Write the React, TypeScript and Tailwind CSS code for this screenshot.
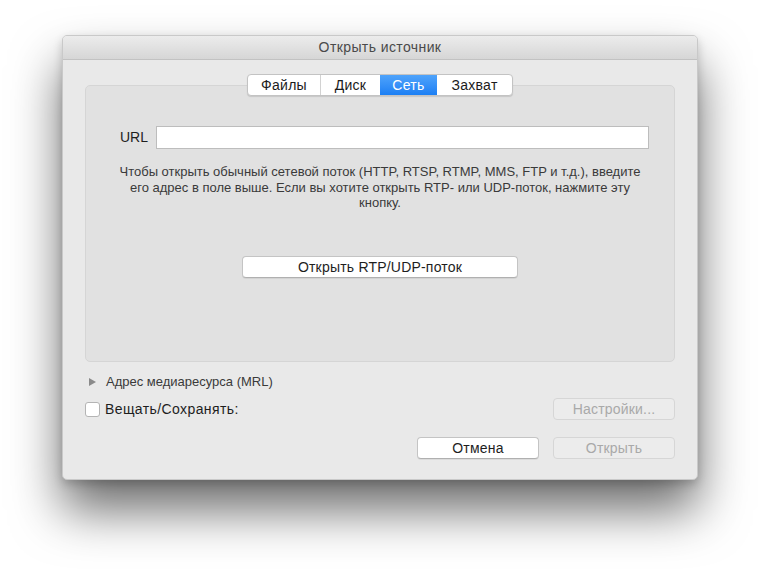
import React from 'react';

const tabs = [
  { label: 'Файлы', w: 'w-[72px]' },
  { label: 'Диск', w: 'w-[60px]' },
  { label: 'Сеть', w: 'w-[57px]', active: true },
  { label: 'Захват', w: 'w-[75px]' },
];

const MacButton: React.FC<{ label: string; disabled?: boolean; className?: string }> = ({
  label,
  disabled,
  className = '',
}) => (
  <button
    type="button"
    className={
      'flex h-[22px] items-center justify-center rounded-[4px] border text-[14px] leading-none tracking-[0.2px] ' +
      (disabled
        ? 'border-[#d6d6d6] bg-[#ececec] text-[#a9a9a9]'
        : 'border-[#c4c4c4] border-b-[#b0b0b0] bg-white text-[#1e1e1e] shadow-[0_1px_0_rgba(0,0,0,0.06)]') +
      ' ' +
      className
    }
  >
    {label}
  </button>
);

export default function App() {
  return (
    <div className="h-[569px] w-[760px] overflow-hidden bg-white pt-[35px] font-['Liberation_Sans',Arial,sans-serif]">
      <div className="ml-[62px] h-[445px] w-[636px] overflow-hidden rounded-[5px] border border-[#c9c9c9] bg-[#e9e9e9] shadow-[0_30px_50px_rgba(0,0,0,0.58),0_4px_10px_rgba(0,0,0,0.18)]">
        {/* title bar */}
        <div className="flex h-[24px] items-center justify-center border-b border-[#c2c2c2] bg-gradient-to-b from-[#ececec] to-[#d6d6d6] text-[14px] tracking-[0.4px] text-[#4a4a4a]">
          Открыть источник
        </div>

        <div className="px-[22px] pt-[14px]">
          {/* segmented tabs */}
          <div className="relative z-10 flex justify-center">
            <div className="flex h-[22px] overflow-hidden rounded-[4px] border border-[#c3c3c3] bg-white shadow-[0_1px_1px_rgba(0,0,0,0.12)]">
              {tabs.map((t, i) => (
                <div
                  key={t.label}
                  className={
                    t.w +
                    ' flex items-center justify-center text-[14px] tracking-[0.3px] ' +
                    (t.active
                      ? 'bg-gradient-to-b from-[#4ea3fb] to-[#1b7ff4] text-white'
                      : 'text-[#1b1b1b]') +
                    (i > 0 && !t.active && !tabs[i - 1].active ? ' border-l border-[#d2d2d2]' : '')
                  }
                >
                  {t.label}
                </div>
              ))}
            </div>
          </div>

          {/* network panel */}
          <div className="-mt-[11px] flex h-[277px] flex-col items-center rounded-[5px] border border-[#d5d5d5] bg-[#e1e1e1] pt-[40px]">
            <div className="flex w-full items-center pl-[34px] pr-[25px]">
              <span className="w-[36px] text-[14px] text-[#1e1e1e]">URL</span>
              <input
                type="text"
                className="h-[23px] flex-1 border border-[#bdbdbd] bg-white outline-none"
              />
            </div>
            <p className="mt-[15px] w-[560px] text-center text-[13px] leading-[15.5px] text-[#3a3a3a]">
              Чтобы открыть обычный сетевой поток (HTTP, RTSP, RTMP, MMS, FTP и т.д.), введите
              <br />
              его адрес в поле выше. Если вы хотите открыть RTP- или UDP-поток, нажмите эту
              <br />
              кнопку.
            </p>
            <MacButton label="Открыть RTP/UDP-поток" className="mt-[45px] h-[21px] w-[276px]" />
          </div>

          {/* MRL disclosure */}
          <div className="mt-[10px] flex items-center text-[13px] text-[#3a3a3a]">
            <svg width="9" height="10" viewBox="0 0 9 10" className="ml-[3px] mr-[9px]">
              <path d="M1 1 L8 5 L1 9 Z" fill="#8a8a8a" />
            </svg>
            Адрес медиаресурса (MRL)
          </div>

          {/* stream row */}
          <div className="mt-[6px] flex items-center justify-between">
            <label className="flex items-center gap-[5px] pt-[1px] text-[14px] tracking-[0.4px] text-[#1e1e1e]">
              <span className="h-[15px] w-[15px] rounded-[3px] border border-[#b4b4b4] bg-white" />
              Вещать/Сохранять:
            </label>
            <MacButton label="Настройки..." disabled className="w-[122px]" />
          </div>

          {/* dialog buttons */}
          <div className="mt-[17px] flex justify-end gap-[14px]">
            <MacButton label="Отмена" className="w-[122px]" />
            <MacButton label="Открыть" disabled className="w-[122px]" />
          </div>
        </div>
      </div>
    </div>
  );
}
